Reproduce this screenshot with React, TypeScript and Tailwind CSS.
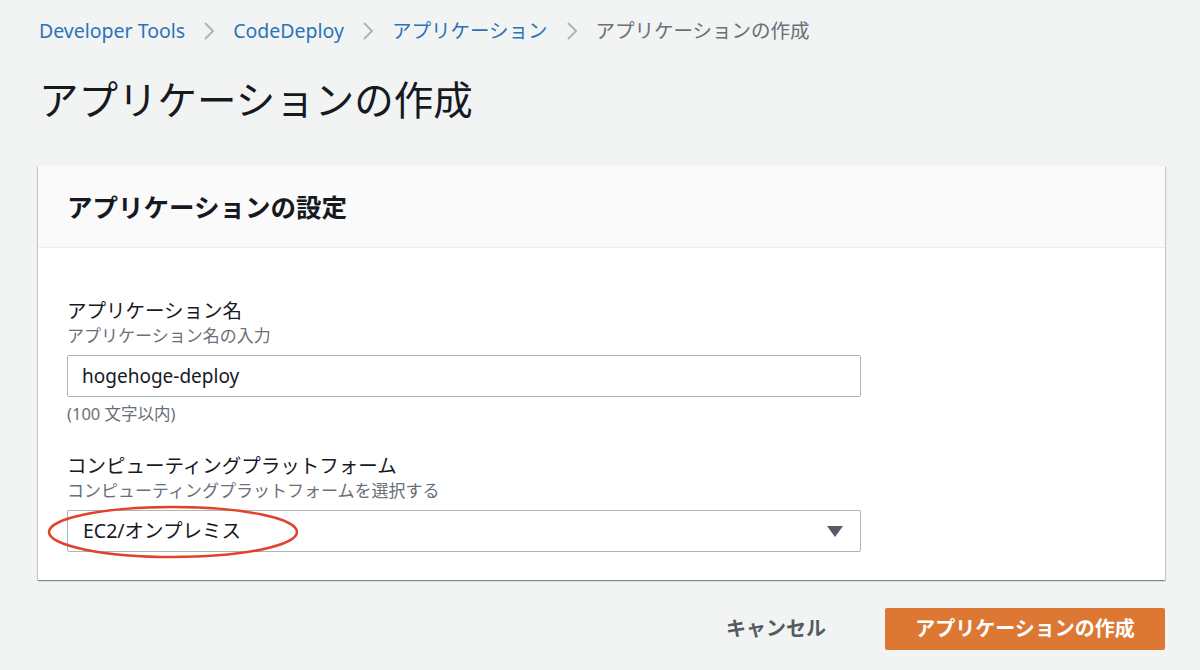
import React from "react";

const font = { fontFamily: '"Noto Sans", "Noto Sans CJK JP", sans-serif' };

function Chevron() {
  return (
    <svg width="12" height="20" viewBox="0 0 12 20" className="mx-[18px]">
      <polyline points="2,2 10,10 2,18" fill="none" stroke="#aab7b8" strokeWidth="2" />
    </svg>
  );
}

export default function App() {
  return (
    <div className="min-h-[670px] w-[1200px] bg-[#f2f3f3] text-[#16191f]" style={font}>
      <div className="pl-[39px] pr-[35px] pt-[19px]">
        {/* breadcrumb */}
        <div className="flex h-[24px] items-center text-[19.5px] leading-[24px]">
          <span className="text-[#2a73b8]">Developer Tools</span>
          <Chevron />
          <span className="text-[#2a73b8]">CodeDeploy</span>
          <Chevron />
          <span className="text-[#2a73b8]">アプリケーション</span>
          <Chevron />
          <span className="text-[#687078]">アプリケーションの作成</span>
        </div>

        {/* title */}
        <h1 className="mt-[33px] text-[39.5px] font-normal leading-[48px] text-[#16191f]">
          アプリケーションの作成
        </h1>

        {/* card */}
        <div className="ml-[-1px] mt-[42px] w-[1127px] bg-white shadow-[0_1px_1px_0_rgba(0,28,36,0.3),1px_1px_1px_0_rgba(0,28,36,0.15),-1px_1px_1px_0_rgba(0,28,36,0.15)]">
          <div className="flex h-[82px] items-center border-b border-[#eaeded] bg-[#fafafa] px-[29px]">
            <h2 className="text-[25.5px] font-bold leading-[32px]">アプリケーションの設定</h2>
          </div>
          <div className="px-[29px] pb-[28px] pt-[50px]">
            <div className="text-[19.5px] leading-[26px]">アプリケーション名</div>
            <div className="mt-[1px] text-[17px] leading-[22px] text-[#687078]">アプリケーション名の入力</div>
            <div className="mt-[8px] flex h-[42px] w-[794px] items-center rounded-[2px] border border-[#aab7b8] px-[14px] text-[19px]">
              hogehoge-deploy
            </div>
            <div className="mt-[7px] text-[16.5px] leading-[20px] text-[#687078]">(100 文字以内)</div>

            <div className="mt-[29px] text-[19.5px] leading-[26px]">コンピューティングプラットフォーム</div>
            <div className="mt-[1px] text-[17px] leading-[22px] text-[#687078]">コンピューティングプラットフォームを選択する</div>
            <div className="relative mt-[8px] flex h-[42px] w-[794px] items-center justify-between rounded-[2px] border border-[#aab7b8] pl-[15px] pr-[17px] text-[19.5px]">
              <span>EC2/オンプレミス</span>
              <svg width="16" height="11" viewBox="0 0 16 11">
                <polygon points="0,0 16,0 8,11" fill="#545b64" />
              </svg>
              <svg
                className="pointer-events-none absolute left-[-21px] top-[-6px]"
                width="252"
                height="54"
                viewBox="0 0 252 54"
              >
                <ellipse cx="126" cy="27" rx="124" ry="25" fill="none" stroke="#e0422b" strokeWidth="2.5" />
              </svg>
            </div>
          </div>
        </div>

        {/* actions */}
        <div className="ml-[-1px] mt-[28px] flex w-[1127px] items-center justify-end">
          <span className="mr-[59px] text-[20px] font-bold text-[#545b64]">キャンセル</span>
          <button className="flex h-[42px] w-[280px] items-center justify-center rounded-[2px] bg-[#dd7834] text-[20px] font-bold text-white">
            アプリケーションの作成
          </button>
        </div>
      </div>
    </div>
  );
}
